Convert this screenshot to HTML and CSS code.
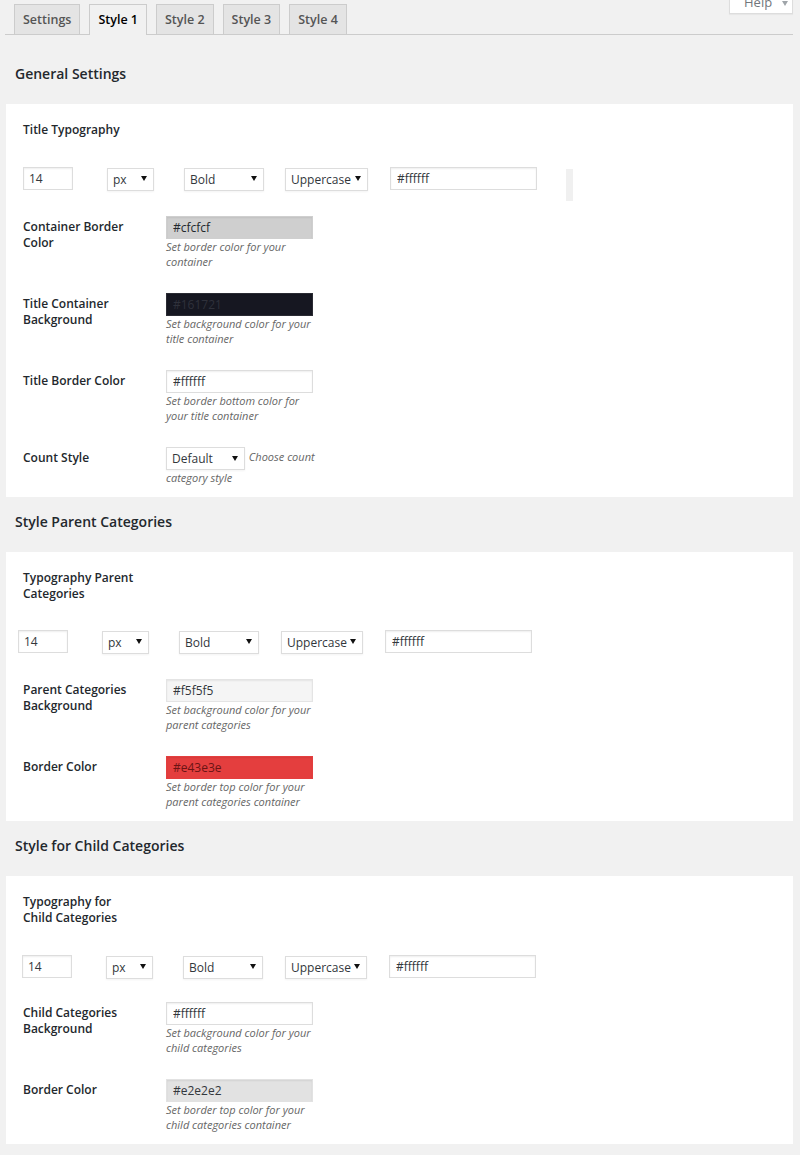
FILE: index.html
```html
<!DOCTYPE html>
<html>
<head>
<meta charset="utf-8">
<link rel="stylesheet" href="styles.css">
</head>
<body>
<div class="wrap">
  <nav class="tabs">
    <a class="tab">Settings</a>
    <a class="tab active">Style 1</a>
    <a class="tab">Style 2</a>
    <a class="tab">Style 3</a>
    <a class="tab">Style 4</a>
  </nav>
  <button class="help">Help <span class="caret"></span></button>

  <h2 class="section-title first">General Settings</h2>
  <div class="card">
    <div class="typo-label">Title Typography</div>
    <div class="typo-row">
      <input class="in f-size" value="14">
      <span class="sel f-unit"><select><option>px</option></select></span>
      <span class="sel f-weight"><select><option>Bold</option></select></span>
      <span class="sel f-transform"><select><option>Uppercase</option></select></span>
      <input class="in f-color" value="#ffffff">
      <span class="ghost"></span>
    </div>
    <div class="field-row">
      <div class="label">Container Border Color</div>
      <div class="field">
        <input class="in color c-cfcfcf" value="#cfcfcf">
        <p class="desc">Set border color for your container</p>
      </div>
    </div>
    <div class="field-row">
      <div class="label">Title Container Background</div>
      <div class="field">
        <input class="in color c-161721" value="#161721">
        <p class="desc">Set background color for your title container</p>
      </div>
    </div>
    <div class="field-row">
      <div class="label">Title Border Color</div>
      <div class="field">
        <input class="in color" value="#ffffff">
        <p class="desc">Set border bottom color for your title container</p>
      </div>
    </div>
    <div class="field-row">
      <div class="label">Count Style</div>
      <div class="field inline">
        <span class="sel f-count"><select><option>Default</option></select></span>
        <em class="desc-inline">Choose count category style</em>
      </div>
    </div>
  </div>

  <h2 class="section-title">Style Parent Categories</h2>
  <div class="card">
    <div class="typo-label">Typography Parent Categories</div>
    <div class="typo-row shift-5">
      <input class="in f-size" value="14">
      <span class="sel f-unit"><select><option>px</option></select></span>
      <span class="sel f-weight"><select><option>Bold</option></select></span>
      <span class="sel f-transform narrow"><select><option>Uppercase</option></select></span>
      <input class="in f-color" value="#ffffff">
    </div>
    <div class="field-row">
      <div class="label">Parent Categories Background</div>
      <div class="field">
        <input class="in color c-f5f5f5" value="#f5f5f5">
        <p class="desc">Set background color for your parent categories</p>
      </div>
    </div>
    <div class="field-row">
      <div class="label">Border Color</div>
      <div class="field">
        <input class="in color c-e43e3e" value="#e43e3e">
        <p class="desc">Set border top color for your parent categories container</p>
      </div>
    </div>
  </div>

  <h2 class="section-title">Style for Child Categories</h2>
  <div class="card">
    <div class="typo-label">Typography for Child Categories</div>
    <div class="typo-row shift-1">
      <input class="in f-size" value="14">
      <span class="sel f-unit"><select><option>px</option></select></span>
      <span class="sel f-weight"><select><option>Bold</option></select></span>
      <span class="sel f-transform narrow"><select><option>Uppercase</option></select></span>
      <input class="in f-color" value="#ffffff">
    </div>
    <div class="field-row">
      <div class="label">Child Categories Background</div>
      <div class="field">
        <input class="in color" value="#ffffff">
        <p class="desc">Set background color for your child categories</p>
      </div>
    </div>
    <div class="field-row">
      <div class="label">Border Color</div>
      <div class="field">
        <input class="in color c-e2e2e2" value="#e2e2e2">
        <p class="desc">Set border top color for your child categories container</p>
      </div>
    </div>
  </div>
</div>
</body>
</html>
```

FILE: styles.css
```css
* { box-sizing: border-box; }

body {
  margin: 0;
  background: #f1f1f1;
  font-family: "Open Sans", "Noto Sans", sans-serif;
  color: #23282d;
}

.wrap {
  position: relative;
  padding: 0 7px 0 5px;
}

.tabs {
  display: flex;
  gap: 9px;
  padding: 4px 0 0 9px;
  border-bottom: 1px solid #ccc;
}

.tab {
  display: block;
  padding: 5px 8px;
  line-height: 19px;
  font-size: 12.5px;
  font-weight: 600;
  color: #555;
  background: #e4e4e4;
  border: 1px solid #ccc;
  border-bottom: none;
}

.tab.active {
  background: #f1f1f1;
  color: #000;
  margin-bottom: -1px;
  padding-bottom: 6px;
}

.help {
  position: absolute;
  top: -9px;
  right: 7px;
  width: 64px;
  height: 23px;
  padding: 0 0 0 14px;
  text-align: left;
  background: #fff;
  border: 1px solid #ddd;
  border-top: none;
  box-shadow: 0 1px 1px rgba(0,0,0,0.04);
  font-family: "Open Sans", sans-serif;
  font-size: 13px;
  line-height: 22px;
  color: #72777c;
}

.caret {
  display: inline-block;
  width: 0;
  height: 0;
  margin-left: 6px;
  border-left: 3px solid transparent;
  border-right: 3px solid transparent;
  border-top: 5px solid #a0a5aa;
  vertical-align: middle;
}

.section-title {
  margin: 15px 0 20px 10px;
  font-size: 14px;
  line-height: 20px;
  font-weight: 600;
  color: #23282d;
}

.section-title.first { margin-top: 29px; }

.card {
  margin-left: 1px;
  background: #fff;
  padding: 18px 17px 12px;
}

.typo-label {
  width: 118px;
  font-size: 12px;
  line-height: 16px;
  font-weight: 600;
}

.typo-row {
  display: flex;
  align-items: flex-start;
  height: 23px;
  margin-top: 29px;
}

.typo-row.shift-5 { margin-left: -5px; margin-top: 28px; }
.typo-row.shift-1 { margin-left: -1px; margin-top: 29px; }

.in {
  height: 23px;
  padding: 0 5px;
  border: 1px solid #ddd;
  box-shadow: inset 0 1px 2px rgba(0,0,0,0.07);
  background: #fff;
  color: #32373c;
  font-family: "Open Sans", sans-serif;
  font-size: 12px;
  outline: none;
}

.f-size { width: 50px; }
.f-color { width: 147px; margin-left: 22px; padding-left: 6px; }

.sel {
  position: relative;
  display: inline-block;
  height: 23px;
  vertical-align: middle;
}

.sel select {
  -webkit-appearance: none;
  appearance: none;
  width: 100%;
  height: 23px;
  padding: 0 10px 0 5px;
  border: 1px solid #ddd;
  box-shadow: 0 1px 2px rgba(0,0,0,0.05);
  background: #fff;
  color: #32373c;
  font-family: "Open Sans", sans-serif;
  font-size: 12px;
  border-radius: 0;
}

.sel::after {
  content: "";
  position: absolute;
  right: 7px;
  top: 9px;
  border-left: 3px solid transparent;
  border-right: 3px solid transparent;
  border-top: 5px solid #111;
  pointer-events: none;
}

.f-unit { width: 47px; margin-left: 34px; }
.f-weight { width: 80px; margin-left: 30px; }
.f-transform { width: 83px; margin-left: 21px; }
.f-transform.narrow { width: 82px; margin-left: 22px; }
.f-count { width: 79px; }

.ghost {
  width: 7px;
  height: 32px;
  margin: 2px 0 0 29px;
  background: #f0f0f0;
}

.field-row {
  display: grid;
  grid-template-columns: 143px 150px;
  margin-top: 24px;
}

.typo-row + .field-row { margin-top: 26px; }
.typo-row.shift-1 + .field-row { margin-top: 24px; }

.label {
  max-width: 118px;
  padding-top: 3px;
  font-size: 12px;
  line-height: 16px;
  font-weight: 600;
}

.field .in.color {
  display: block;
  width: 147px;
  padding-left: 6px;
}

.c-cfcfcf { background: #cfcfcf !important; border-color: #cfcfcf !important; color: #23282d !important; }
.c-161721 { background: #161721 !important; border-color: #2a2b33 !important; color: #2f313b !important; }
.c-f5f5f5 { background: #f5f5f5 !important; border-color: #e4e4e4 !important; }
.c-e43e3e { background: #e43e3e !important; border-color: #e43e3e !important; color: #6b1414 !important; }
.c-e2e2e2 { background: #e2e2e2 !important; border-color: #e2e2e2 !important; }

.desc {
  margin: 0;
  font-size: 11px;
  line-height: 15px;
  font-style: italic;
  color: #666;
}

.field.inline {
  font-size: 11px;
  line-height: 15px;
}

.desc-inline {
  font-size: 11px;
  color: #666;
  margin-left: 1px;
}
```
